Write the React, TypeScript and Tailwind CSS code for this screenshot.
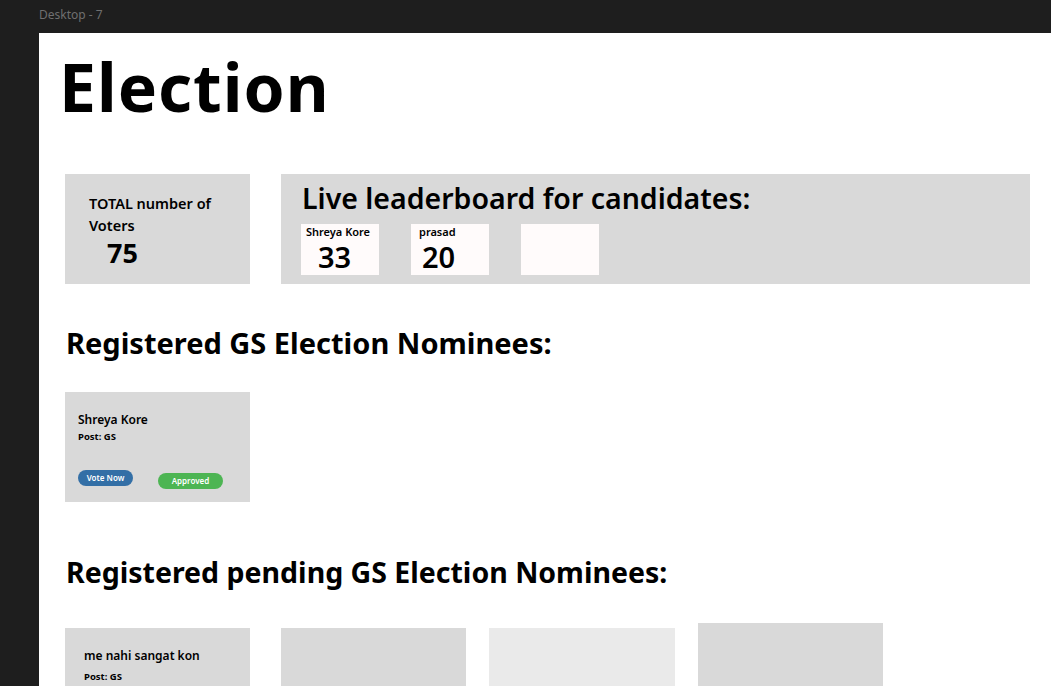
import React from "react";

type Leader = { name: string; votes: number | null; namePad: string; votePad: string };

const leaders: Leader[] = [
  { name: "Shreya Kore", votes: 33, namePad: "pl-[5px]", votePad: "pl-[17px]" },
  { name: "prasad", votes: 20, namePad: "pl-[8px]", votePad: "pl-[11px]" },
  { name: "", votes: null, namePad: "", votePad: "" },
];

const font = { fontFamily: '"Noto Sans", "Open Sans", sans-serif' };

export default function App() {
  return (
    <div className="h-[686px] w-full overflow-hidden bg-[#1e1e1e]" style={font}>
      {/* Canvas label */}
      <div className="h-[33px] pl-[39px] pt-[7px] text-[12px] leading-[16px] text-[#6f6f6f]">
        Desktop - 7
      </div>

      {/* Frame */}
      <div className="ml-[39px] h-[653px] overflow-hidden bg-white">
        <h1 className="pl-[20px] pt-[20px] text-[66px] font-bold leading-none tracking-[1px] text-black">
          Election
        </h1>

        {/* Stats row */}
        <div className="mt-[55px] flex gap-[31px] pl-[26px]">
          <div className="h-[110px] w-[185px] shrink-0 bg-[#d9d9d9] pl-[24px] pt-[18px]">
            <p className="text-[14.5px] font-semibold leading-[22px] text-black">
              TOTAL number of
              <br />
              Voters
            </p>
            <p className="mt-[2px] pl-[18px] text-[27px] font-bold leading-[30px] text-black">
              75
            </p>
          </div>

          <div className="h-[110px] w-[749px] shrink-0 bg-[#d9d9d9] pl-[20px] pt-[5px]">
            <h2 className="pl-[1px] text-[28.5px] font-semibold leading-[38px] text-black">
              Live leaderboard for candidates:
            </h2>
            <div className="mt-[7px] flex gap-[32px]">
              {leaders.map((l, i) => (
                <div key={i} className="h-[51px] w-[78px] bg-[#fffbfb] pt-[1px]">
                  {l.name && (
                    <p className={`${l.namePad} text-[11px] font-semibold leading-[14px] text-black`}>
                      {l.name}
                    </p>
                  )}
                  {l.votes !== null && (
                    <p className={`${l.votePad} mt-[3px] text-[29px] font-semibold leading-[30px] text-black`}>
                      {l.votes}
                    </p>
                  )}
                </div>
              ))}
            </div>
          </div>
        </div>

        {/* Approved nominees */}
        <h2 className="mt-[41px] pl-[27px] text-[29px] font-bold leading-[36px] text-black">
          Registered GS Election Nominees:
        </h2>
        <div className="mt-[31px] pl-[26px]">
          <div className="h-[110px] w-[185px] bg-[#d9d9d9] pl-[13px] pt-[19px]">
            <p className="text-[12px] font-semibold leading-[18px] text-black">Shreya Kore</p>
            <p className="mt-[1px] text-[9.5px] font-bold leading-[14px] text-black">Post: GS</p>
            <div className="mt-[26px] flex items-start gap-[25px]">
              <button className="h-[16px] w-[55px] rounded-full bg-[#336fa6] text-[8px] font-semibold leading-[16px] text-white">
                Vote Now
              </button>
              <button className="mt-[3px] h-[16px] w-[65px] rounded-full bg-[#4db553] text-[8px] font-semibold leading-[16px] text-white">
                Approved
              </button>
            </div>
          </div>
        </div>

        {/* Pending nominees */}
        <h2 className="mt-[52px] pl-[27px] text-[28.5px] font-bold leading-[36px] text-black">
          Registered pending GS Election Nominees:
        </h2>
        <div className="mt-[38px] flex items-start pl-[26px]">
          <div className="h-[110px] w-[185px] shrink-0 bg-[#d9d9d9] pl-[19px] pt-[19px]">
            <p className="text-[12px] font-semibold leading-[18px] text-black">me nahi sangat kon</p>
            <p className="mt-[5px] text-[9.5px] font-bold leading-[14px] text-black">Post: GS</p>
          </div>
          <div className="ml-[31px] h-[110px] w-[185px] shrink-0 bg-[#d9d9d9]" />
          <div className="ml-[23px] h-[110px] w-[186px] shrink-0 bg-[#eaeaea]" />
          <div className="ml-[23px] -mt-[5px] h-[115px] w-[185px] shrink-0 bg-[#d9d9d9]" />
        </div>
      </div>
    </div>
  );
}
